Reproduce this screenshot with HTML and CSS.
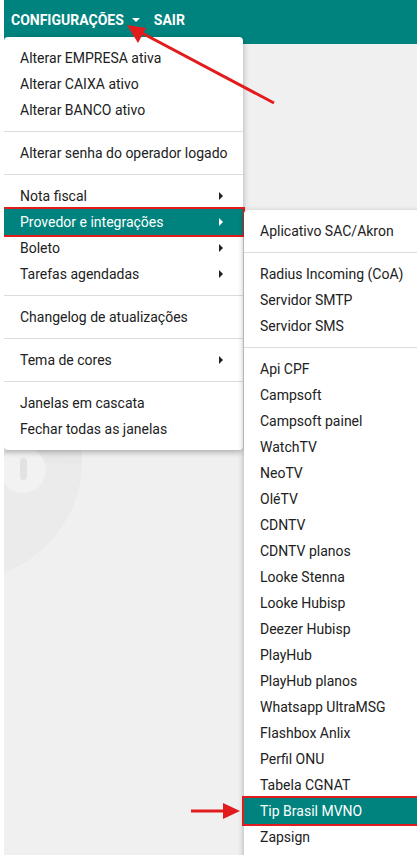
FILE: index.html
```html
<!DOCTYPE html>
<html lang="pt-BR">
<head>
    <meta charset="UTF-8">
    <meta name="viewport" content="width=device-width, initial-scale=1.0">
    <title>Configurações</title>
    <link rel="stylesheet" href="styles.css">
</head>
<body>
    <div class="page">
        <header class="topbar">
            <a class="topbar-link" href="#">CONFIGURAÇÕES <span class="caret"></span></a>
            <a class="topbar-link" href="#">SAIR</a>
        </header>

        <main class="workspace">
            <svg class="watermark" width="130" height="260" viewBox="0 0 130 260">
                <circle cx="-42" cy="116" r="120" fill="#e8e8e8"/>
                <path d="M-42 116 L78 120 A120 120 0 0 1 -42 236 Z" fill="#ebebeb"/>
                <circle cx="19" cy="126" r="23" fill="#f2f2f2"/>
                <rect x="16" y="114" width="7" height="22" rx="3.5" fill="#e2e2e2"/>
            </svg>
        </main>

        <ul class="menu main-menu">
            <li class="menu-item">Alterar EMPRESA ativa</li>
            <li class="menu-item">Alterar CAIXA ativo</li>
            <li class="menu-item">Alterar BANCO ativo</li>
            <li class="divider"></li>
            <li class="menu-item">Alterar senha do operador logado</li>
            <li class="divider"></li>
            <li class="menu-item has-sub">Nota fiscal</li>
            <li class="menu-item has-sub active marked">Provedor e integrações</li>
            <li class="menu-item has-sub">Boleto</li>
            <li class="menu-item has-sub">Tarefas agendadas</li>
            <li class="divider"></li>
            <li class="menu-item">Changelog de atualizações</li>
            <li class="divider"></li>
            <li class="menu-item has-sub">Tema de cores</li>
            <li class="divider"></li>
            <li class="menu-item">Janelas em cascata</li>
            <li class="menu-item">Fechar todas as janelas</li>
        </ul>

        <ul class="menu sub-menu">
            <li class="menu-item">Aplicativo SAC/Akron</li>
            <li class="divider"></li>
            <li class="menu-item">Radius Incoming (CoA)</li>
            <li class="menu-item">Servidor SMTP</li>
            <li class="menu-item">Servidor SMS</li>
            <li class="divider"></li>
            <li class="menu-item">Api CPF</li>
            <li class="menu-item">Campsoft</li>
            <li class="menu-item">Campsoft painel</li>
            <li class="menu-item">WatchTV</li>
            <li class="menu-item">NeoTV</li>
            <li class="menu-item">OléTV</li>
            <li class="menu-item">CDNTV</li>
            <li class="menu-item">CDNTV planos</li>
            <li class="menu-item">Looke Stenna</li>
            <li class="menu-item">Looke Hubisp</li>
            <li class="menu-item">Deezer Hubisp</li>
            <li class="menu-item">PlayHub</li>
            <li class="menu-item">PlayHub planos</li>
            <li class="menu-item">Whatsapp UltraMSG</li>
            <li class="menu-item">Flashbox Anlix</li>
            <li class="menu-item">Perfil ONU</li>
            <li class="menu-item">Tabela CGNAT</li>
            <li class="menu-item active marked">Tip Brasil MVNO</li>
            <li class="menu-item">Zapsign</li>
        </ul>

        <!-- red annotation arrows -->
        <svg class="annotations" width="417" height="855" viewBox="0 0 417 855">
            <line x1="274" y1="103" x2="140" y2="32" stroke="#e21c1c" stroke-width="3"/>
            <polygon points="127,25 146,28 138,43" fill="#e21c1c"/>
            <line x1="191" y1="811" x2="226" y2="811" stroke="#e21c1c" stroke-width="3"/>
            <polygon points="240,811 223,803 223,819" fill="#e21c1c"/>
        </svg>
    </div>
</body>
</html>
```

FILE: styles.css
```css
html, body { margin: 0; padding: 0; }
body { font-family: Roboto, "Liberation Sans", Arial, sans-serif; background: #fff; color: #212121; overflow: hidden; }
.page { position: relative; margin-left: 4px; height: 855px; display: flex; flex-direction: column; overflow: hidden; }

.topbar { height: 44px; background: #00837e; display: flex; align-items: flex-start; gap: 14px; padding: 10px 0 0 7px; box-sizing: border-box; }
.topbar-link { color: #fff; text-decoration: none; font-weight: bold; font-size: 14px; line-height: 20px; display: flex; align-items: center; }
.caret { display: inline-block; margin-left: 8px; border-left: 4px solid transparent; border-right: 4px solid transparent; border-top: 4px solid #fff; }

.workspace { flex: 1; background: #f0f0f0; position: relative; }
.watermark { position: absolute; left: 0; top: 300px; }

.menu { list-style: none; margin: 0; padding: 8px 0; background: #fff; position: absolute; font-size: 14px; box-shadow: 0 2px 6px rgba(0,0,0,0.3); }
.main-menu { left: 0; top: 37px; width: 239px; border-radius: 4px; }
.sub-menu { left: 240px; top: 210px; width: 200px; border-radius: 4px 0 0 0; }

.menu-item { height: 26px; line-height: 26px; padding-left: 16px; position: relative; white-space: nowrap; }
.divider { height: 1px; background: #dcdcdc; margin: 8px 0; }
.has-sub::after { content: ""; position: absolute; right: 20px; top: 9px; border-top: 4px solid transparent; border-bottom: 4px solid transparent; border-left: 4px solid #212121; }

.active { background: #00837e; color: #fff; }
.active.has-sub::after { border-left-color: #fff; }
.marked { outline: 2px solid #e21c1c; outline-offset: 0; }

.annotations { position: absolute; left: -4px; top: 0; pointer-events: none; }
```
